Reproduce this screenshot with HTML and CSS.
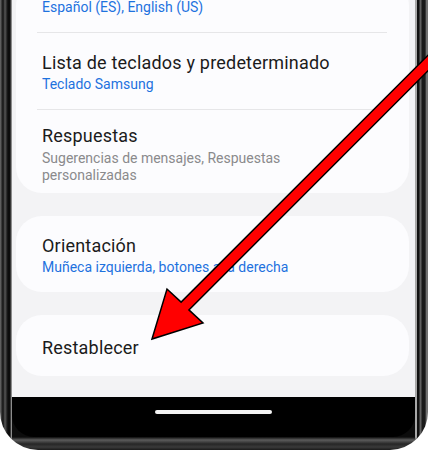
FILE: index.html
```html
<!DOCTYPE html>
<html lang="es">
<head>
<meta charset="utf-8">
<title>Ajustes del teclado</title>
<link rel="stylesheet" href="styles.css">
</head>
<body>
<div class="phone">
  <div class="screen">
    <div class="card card--top">
      <div class="item item--first">
        <div class="sub sub--blue">Español (ES), English (US)</div>
      </div>
      <div class="sep"></div>
      <div class="item">
        <div class="title">Lista de teclados y predeterminado</div>
        <div class="sub sub--blue">Teclado Samsung</div>
      </div>
      <div class="sep"></div>
      <div class="item item--tight">
        <div class="title">Respuestas</div>
        <div class="sub sub--gray">Sugerencias de mensajes, Respuestas personalizadas</div>
      </div>
    </div>
    <div class="card">
      <div class="item">
        <div class="title">Orientación</div>
        <div class="sub sub--blue">Muñeca izquierda, botones a la derecha</div>
      </div>
    </div>
    <div class="card">
      <div class="item item--single">
        <div class="title">Restablecer</div>
      </div>
    </div>
  </div>
  <div class="navbar"><div class="home"></div></div>
  <svg class="arrow" width="428" height="450" viewBox="0 0 428 450" aria-hidden="true">
    <polygon points="152,339 167,289 181.1,302.1 441.1,42.1 448.9,49.9 188.9,309.9 203,323" fill="#ff0000" stroke="#000" stroke-width="1.5" stroke-linejoin="miter"/>
  </svg>
</div>
</body>
</html>
```
FILE: styles.css
```css
* { box-sizing: border-box; }
html, body { margin: 0; padding: 0; background: #ffffff; }
body { font-family: Roboto, "Noto Sans", "Liberation Sans", sans-serif; }

.phone {
  position: relative;
  width: 428px;
  height: 450px;
  overflow: hidden;
  padding: 0 13px 0 12px;
  border-radius: 0 0 38px 38px;
  display: flex;
  flex-direction: column;
  background:
    linear-gradient(to bottom, rgba(12,12,12,0) 0, #5c5c5c 3px, #262626 7px, #3a3a3a 10px, #1a1a1a 13px) left bottom / 100% 13px no-repeat,
    linear-gradient(to right,
      #6e6e6e 0, #2c2c2c 2px, #121212 3px, #565656 5px, #202020 7px, #0c0c0c 8px,
      #0c0c0c 10px, #8c8c8c 11.5px, #0c0c0c 12px,
      #0c0c0c 415px, #a8a8a8 415.5px, #a8a8a8 416.5px, #111 417.5px, #111 419px,
      #616161 420px, #616161 421px, #1a1a1a 422px, #1a1a1a 425px, #717171 426.5px, #717171 428px);
}

.screen {
  height: 397px;
  flex: none;
  background: #f3f3f5;
  padding: 0 6px 0 4px;
  overflow: hidden;
}

.card {
  background: #fcfcfe;
  border-radius: 26px;
  margin-top: 23px;
}
.card--top { margin-top: -20px; }

.item { padding: 18.5px 44px 17.5px 26px; }
.item--first { padding-top: 19px; padding-bottom: 17px; }
.item--tight { padding-top: 15px; padding-bottom: 9px; }
.item--tight .sub { margin-top: 3px; line-height: 17px; }
.item--single { padding-top: 21.5px; padding-bottom: 17.5px; }

.sep {
  height: 1px;
  margin: 0 22px 0 21px;
  background: #e6e6e8;
}

.title {
  font-size: 18px;
  line-height: 22px;
  letter-spacing: 0.2px;
  color: #1b1b1b;
}
.sub {
  font-size: 14px;
  line-height: 16px;
  margin-top: 2px;
}
.item--first .sub { margin-top: 0; }
.sub--blue { color: #1e72de; }
.sub--gray { color: #8a8a8c; }

.navbar {
  height: 40px;
  flex: none;
  background: #000;
  border-radius: 0 0 22px 22px;
  display: flex;
  justify-content: center;
  padding-top: 13px;
}
.home {
  width: 117px;
  height: 4px;
  border-radius: 2px;
  background: #f4f4f4;
}

.arrow {
  position: absolute;
  left: 0;
  top: 0;
}
```
